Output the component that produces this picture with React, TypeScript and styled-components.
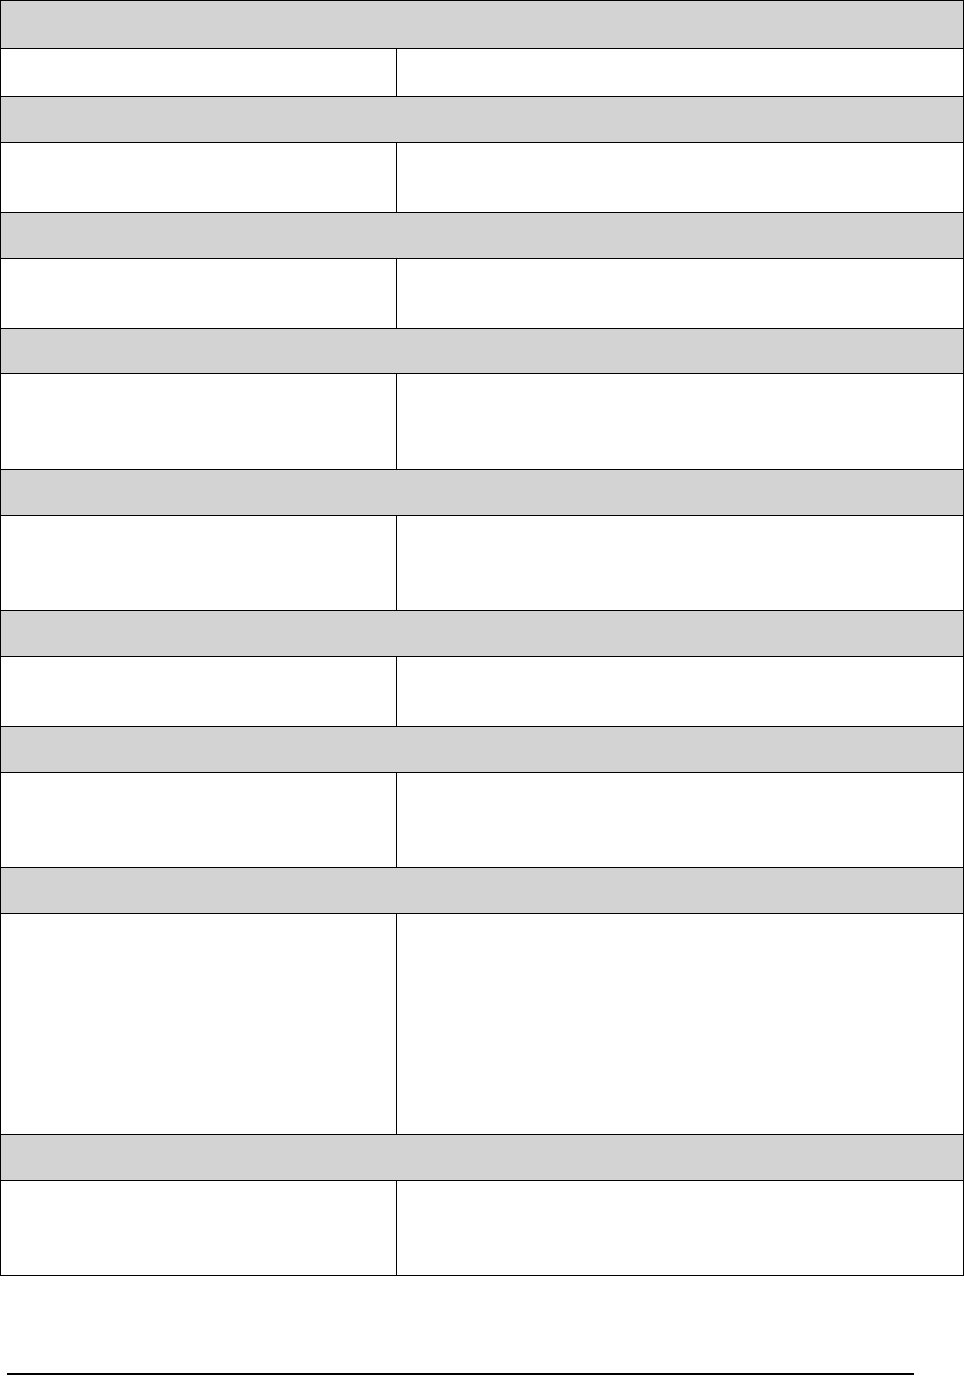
import styled, {createGlobalStyle} from "styled-components";

const GlobalStyle = createGlobalStyle`
    html, body {
        margin: 0;
        padding: 0;
        background: #ffffff;
        font-family: "Liberation Sans", Arial, sans-serif;
    }
`

const StyledPage = styled.div`
    display: flex;
    flex-direction: column;

    width: 964px;
`

const StyledTable = styled.div`
    display: flex;
    flex-direction: column;

    box-sizing: border-box;
    width: 964px;

    border: 1px solid #000;
    border-bottom: none;
`

const StyledSectionHeader = styled.div<{ $height: number }>`
    box-sizing: border-box;
    height: ${props => props.$height}px;

    background-color: #d3d3d3;
    border-bottom: 1px solid #000;
`

const StyledRow = styled.div<{ $height: number }>`
    display: grid;
    grid-template-columns: 396px 1fr;

    box-sizing: border-box;
    height: ${props => props.$height}px;

    border-bottom: 1px solid #000;
`

const StyledLabelCell = styled.div`
    box-sizing: border-box;
    border-right: 1px solid #000;
`

const StyledValueCell = styled.div`
    box-sizing: border-box;
`

const StyledFooterRule = styled.hr`
    box-sizing: border-box;
    width: 907px;
    height: 2px;

    margin: 97px 0 0 7px;

    border: none;
    background-color: #000;
`

// header height, row height
const sections: [number, number][] = [
	[48, 48],
	[46, 70],
	[46, 70],
	[45, 96],
	[46, 95],
	[46, 70],
	[46, 95],
	[46, 221],
	[46, 95],
]

export default function App() {
	return (
		<>
			<GlobalStyle/>
			<StyledPage>
				<StyledTable>
					{sections.map(([header, row], index) => (
						<div key={index}>
							<StyledSectionHeader $height={header}/>
							<StyledRow $height={row}>
								<StyledLabelCell/>
								<StyledValueCell/>
							</StyledRow>
						</div>
					))}
				</StyledTable>
				<StyledFooterRule/>
			</StyledPage>
		</>
	)
}
